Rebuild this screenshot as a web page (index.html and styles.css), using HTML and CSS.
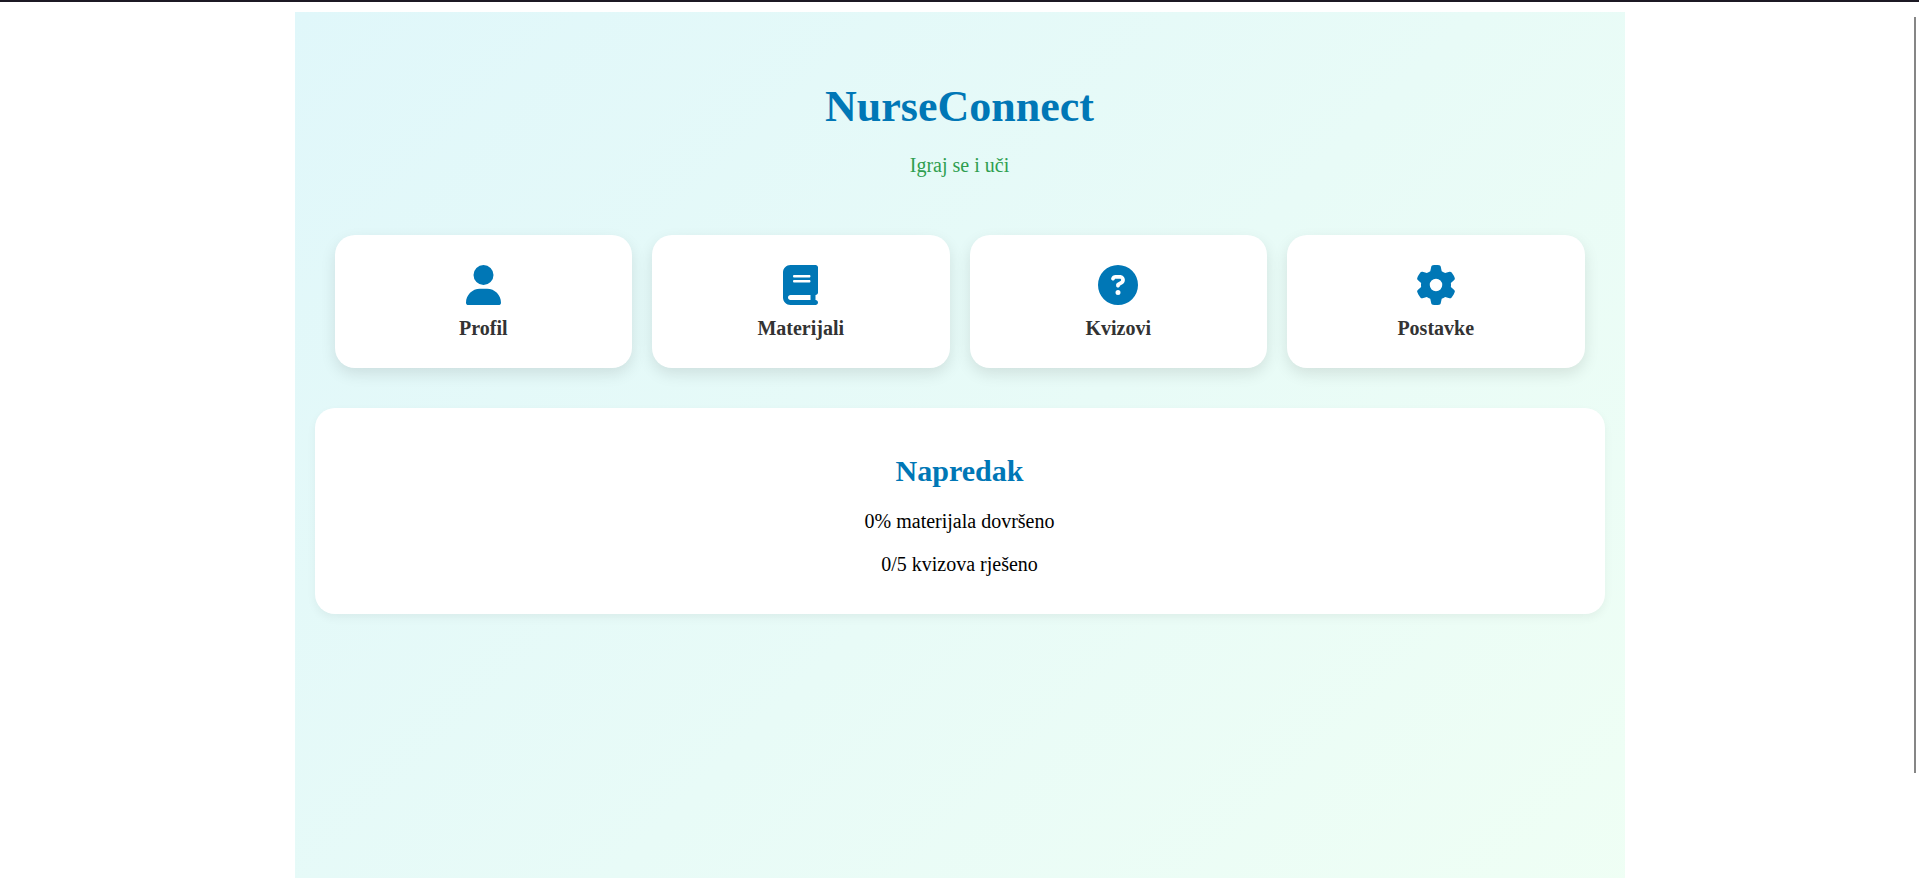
FILE: index.html
```html
<!DOCTYPE html>
<html lang="hr">
<head>
<meta charset="utf-8">
<meta name="viewport" content="width=device-width, initial-scale=1">
<title>NurseConnect</title>
<link rel="stylesheet" href="styles.css">
</head>
<body>
<div class="scroll-thumb" aria-hidden="true"></div>
<main class="app">
  <header class="header">
    <h1 class="title">NurseConnect</h1>
    <p class="tagline">Igraj se i uči</p>
  </header>
  <nav class="menu">
    <a class="card" href="#profil">
      <svg class="icon" viewBox="0 0 448 512" aria-hidden="true"><path d="M224 256A128 128 0 1 0 224 0a128 128 0 1 0 0 256zm-45.700 48C79.800 304 0 383.800 0 482.300C0 498.700 13.300 512 29.700 512H418.300c16.400 0 29.700-13.300 29.700-29.700C448 383.800 368.200 304 269.700 304H178.300z"/></svg>
      <span>Profil</span>
    </a>
    <a class="card" href="#materijali">
      <svg class="icon" viewBox="0 0 448 512" aria-hidden="true"><path d="M96 0C43 0 0 43 0 96V416c0 53 43 96 96 96H384h32c17.700 0 32-14.300 32-32s-14.300-32-32-32V384c17.700 0 32-14.300 32-32V32c0-17.700-14.300-32-32-32H384 96zm0 384H352v64H96c-17.700 0-32-14.300-32-32s14.300-32 32-32zm32-240c0-8.800 7.200-16 16-16H336c8.800 0 16 7.200 16 16s-7.200 16-16 16H144c-8.800 0-16-7.200-16-16zm16 48H336c8.800 0 16 7.200 16 16s-7.200 16-16 16H144c-8.800 0-16-7.200-16-16s7.200-16 16-16z"/></svg>
      <span>Materijali</span>
    </a>
    <a class="card" href="#kvizovi">
      <svg class="icon" viewBox="0 0 512 512" aria-hidden="true"><path d="M256 512A256 256 0 1 0 256 0a256 256 0 1 0 0 512zM169.800 165.300c7.900-22.300 29.100-37.300 52.800-37.300h58.300c34.900 0 63.100 28.300 63.100 63.100c0 22.600-12.100 43.500-31.700 54.800L280 264.400c-.2 13-10.900 23.600-24 23.600c-13.300 0-24-10.700-24-24V250.500c0-8.600 4.600-16.500 12.100-20.800l44.300-25.400c4.700-2.700 7.600-7.700 7.600-13.100c0-8.400-6.800-15.100-15.100-15.100H222.600c-3.400 0-6.400 2.100-7.500 5.300l-.4 1.200c-4.400 12.500-18.200 19-30.600 14.600s-19-18.200-14.600-30.600l.4-1.200zM224 352a32 32 0 1 1 64 0 32 32 0 1 1 -64 0z"/></svg>
      <span>Kvizovi</span>
    </a>
    <a class="card" href="#postavke">
      <svg class="icon" viewBox="0 0 512 512" aria-hidden="true"><path d="M495.900 166.600c3.200 8.700 .5 18.400-6.400 24.600l-43.300 39.400c1.100 8.300 1.700 16.800 1.700 25.400s-.6 17.100-1.700 25.400l43.300 39.400c6.900 6.200 9.600 15.900 6.400 24.600c-4.400 11.900-9.700 23.300-15.800 34.300l-4.700 8.100c-6.600 11-14 21.400-22.100 31.200c-5.900 7.200-15.700 9.600-24.500 6.800l-55.700-17.700c-13.400 10.300-28.200 18.900-44 25.400l-12.500 57.100c-2 9.100-9 16.300-18.200 17.800c-13.800 2.300-28 3.500-42.500 3.500s-28.700-1.200-42.500-3.500c-9.200-1.500-16.200-8.700-18.200-17.800l-12.500-57.100c-15.800-6.500-30.600-15.100-44-25.400L83.100 425.900c-8.800 2.800-18.600 .3-24.500-6.800c-8.100-9.800-15.500-20.200-22.100-31.200l-4.700-8.100c-6.100-11-11.400-22.400-15.800-34.300c-3.200-8.700-.5-18.400 6.400-24.600l43.300-39.400C64.600 273.100 64 264.600 64 256s.6-17.100 1.700-25.400L22.400 191.200c-6.900-6.200-9.600-15.900-6.400-24.600c4.400-11.900 9.700-23.300 15.800-34.300l4.700-8.100c6.600-11 14-21.400 22.100-31.200c5.900-7.200 15.700-9.600 24.500-6.800l55.700 17.700c13.400-10.300 28.200-18.900 44-25.400l12.500-57.100c2-9.100 9-16.300 18.200-17.800C227.300 1.200 241.500 0 256 0s28.700 1.200 42.500 3.500c9.200 1.500 16.200 8.700 18.200 17.800l12.500 57.100c15.800 6.500 30.600 15.100 44 25.400l55.700-17.700c8.800-2.800 18.600-.3 24.500 6.800c8.100 9.800 15.500 20.200 22.100 31.200l4.700 8.100c6.100 11 11.400 22.400 15.800 34.300zM256 336a80 80 0 1 0 0-160 80 80 0 1 0 0 160z"/></svg>
      <span>Postavke</span>
    </a>
  </nav>
  <section class="progress" aria-labelledby="napredak">
    <h2 class="progress-title" id="napredak">Napredak</h2>
    <p class="progress-line">0% materijala dovršeno</p>
    <p class="progress-line">0/5 kvizova rješeno</p>
  </section>
</main>
</body>
</html>
```
FILE: styles.css
```css
* {
  box-sizing: border-box;
}

body {
  display: flex;
  flex-direction: column;
  min-height: 100vh;
  margin: 0;
  padding-top: 10px;
  border-top: 2px solid #1c1924;
  background: #fff;
  color: #000;
  font-family: "Liberation Serif", "Times New Roman", serif;
  font-size: 20px;
  line-height: 23px;
  text-align: center;
}

.app {
  flex: 1;
  width: 100%;
  max-width: 1330px;
  margin: 0 auto;
  padding: 20px;
  background: linear-gradient(135deg, #e0f7fa, #f0fff4 108%);
}

.header {
  padding: 30px 20px 20px;
}

.title {
  margin: 20px 0;
  color: #0077b6;
  font-size: 44px;
  line-height: 50px;
}

.tagline {
  margin: 22px 0 18px;
  color: #2e9e4f;
}

.menu {
  display: grid;
  grid-template-columns: repeat(auto-fit, minmax(200px, 1fr));
  gap: 20px;
  padding: 20px;
}

.card {
  display: flex;
  flex-direction: column;
  align-items: center;
  gap: 12px;
  padding: 30px 30px 28px;
  border-radius: 20px;
  background: #fff;
  box-shadow: 0 6px 15px rgba(0, 0, 0, 0.1);
  color: #333;
  font-weight: bold;
  text-decoration: none;
}

.icon {
  height: 40px;
  fill: #0077b6;
}

.progress {
  margin-top: 20px;
  padding: 20px 20px 18px;
  border-radius: 20px;
  background: #fff;
  box-shadow: 0 4px 10px rgba(0, 0, 0, 0.05);
}

.progress-title {
  margin: 25px 0 22px;
  color: #0077b6;
  font-size: 30px;
  line-height: 35px;
}

.progress-line {
  margin: 20px 0;
}

.scroll-thumb {
  position: fixed;
  top: 17px;
  right: 3px;
  bottom: 105px;
  width: 2px;
  background: #868686;
}
```
